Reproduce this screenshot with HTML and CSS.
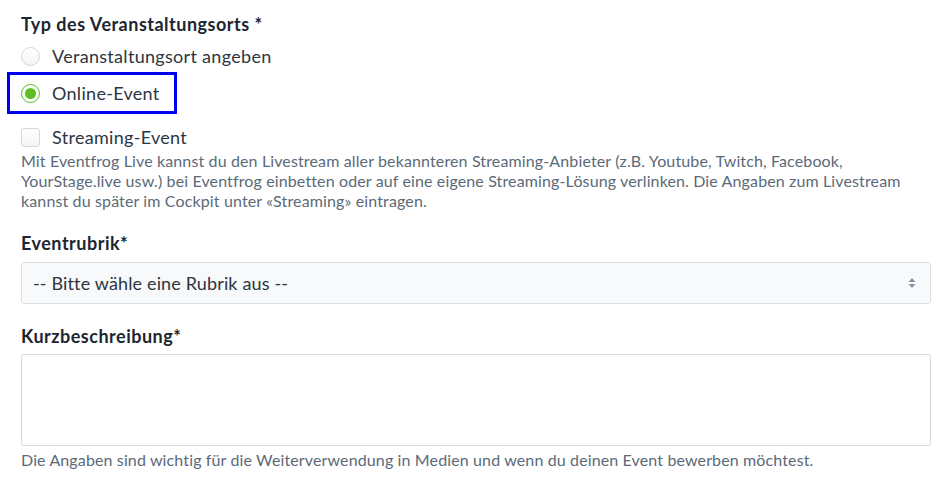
FILE: index.html
```html
<!DOCTYPE html>
<html lang="de">
<head>
<meta charset="utf-8">
<link rel="stylesheet" href="styles.css">
</head>
<body>
<form class="form">
  <div class="group">
    <div class="label">Typ des Veranstaltungsorts *</div>
    <label class="option row-1"><span class="radio"></span><span>Veranstaltungsort angeben</span></label>
    <label class="option highlight"><span class="radio checked"></span><span>Online-Event</span></label>
    <label class="option row-check"><span class="checkbox"></span><span>Streaming-Event</span></label>
    <p class="help">Mit Eventfrog Live kannst du den Livestream aller bekannteren Streaming-Anbieter (z.B. Youtube, Twitch, Facebook,<br>YourStage.live usw.) bei Eventfrog einbetten oder auf eine eigene Streaming-Lösung verlinken. Die Angaben zum Livestream<br>kannst du später im Cockpit unter «Streaming» eintragen.</p>
  </div>
  <div class="group">
    <div class="label">Eventrubrik*</div>
    <div class="select">
      <span>-- Bitte wähle eine Rubrik aus --</span>
      <svg class="arrows" width="8" height="12" viewBox="0 0 8 12"><path d="M4 1 L7.5 5 H0.5 Z" fill="#8a96a3"/><path d="M4 11 L7.5 7 H0.5 Z" fill="#8a96a3"/></svg>
    </div>
  </div>
  <div class="group">
    <div class="label">Kurzbeschreibung*</div>
    <div class="textarea"></div>
    <p class="help help-bottom">Die Angaben sind wichtig für die Weiterverwendung in Medien und wenn du deinen Event bewerben möchtest.</p>
  </div>
</form>
</body>
</html>
```
FILE: styles.css
```css
html, body { margin: 0; padding: 0; background: #fff; }
body {
  font-family: "Lato", "Noto Sans", sans-serif;
  color: #2c3641;
  width: 944px;
  height: 486px;
  overflow: hidden;
}
.form { padding: 12px 13px 0 21px; display: flex; flex-direction: column; }
.label {
  font-size: 18px;
  line-height: 24px;
  font-weight: 700;
  letter-spacing: 0.5px;
  color: #1c2631;
}
.option {
  display: flex;
  align-items: center;
  gap: 12px;
  font-size: 18px;
  line-height: 24px;
  letter-spacing: 0.3px;
  color: #2c3641;
}
.row-1 { height: 24px; margin-top: 8px; }
.highlight {
  margin: 4px 0 0 -14px;
  width: 153px;
  height: 36px;
  border: 3px solid #0000f0;
  padding-left: 11px;
  box-sizing: content-box;
}
.row-check { height: 24px; margin-top: 11px; }
.radio {
  width: 17px; height: 17px;
  border: 1px solid #d3d8dd;
  border-radius: 50%;
  background: linear-gradient(#ffffff, #f3f5f7);
  flex: none;
  display: flex; align-items: center; justify-content: center;
}
.radio.checked { border-color: #5cbf1f; background: #fff; }
.radio.checked::after {
  content: ""; width: 11px; height: 11px; border-radius: 50%; background: #5cbf1f;
}
.checkbox {
  width: 17px; height: 17px;
  border: 1px solid #d3d8dd;
  border-radius: 3px;
  background: linear-gradient(#ffffff, #f3f5f7);
  flex: none;
}
.help {
  margin: 2px 0 0;
  font-size: 16px;
  line-height: 20px;
  letter-spacing: 0.13px;
  color: #5b6a79;
  white-space: nowrap;
}
.help-bottom { margin-top: 4px; }
.group + .group { margin-top: 20px; }
.select {
  margin-top: 7px;
  height: 40px;
  border: 1px solid #dcdfe3;
  border-radius: 3px;
  background: #f8f9fa;
  display: flex;
  align-items: center;
  justify-content: space-between;
  padding: 0 14px 0 11px;
  font-size: 18px;
  letter-spacing: 0.15px;
  color: #2c3641;
}
.arrows { display: block; }
.textarea {
  margin-top: 6px;
  height: 90px;
  border: 1px solid #d6dade;
  border-radius: 3px;
  background: #fff;
}
```
